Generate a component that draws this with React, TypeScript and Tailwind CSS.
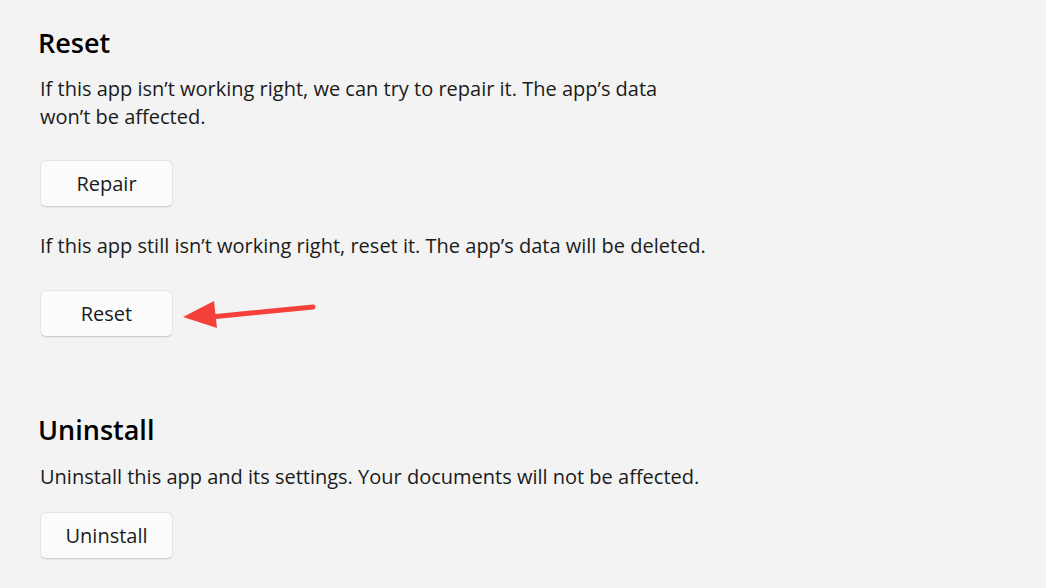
import React from 'react'

function ActionButton({ label }: { label: string }) {
  return (
    <button
      type="button"
      className="h-[47px] w-[133px] rounded-[6px] border border-[#e5e5e5] border-b-[#cfcfcf] bg-[#fbfbfb] text-[20px] text-[#1b1b1b] shadow-[0_1px_0_rgba(0,0,0,0.04)]"
    >
      {label}
    </button>
  )
}

export default function App() {
  return (
    <div
      className="h-[588px] w-[1046px] overflow-hidden bg-[#f3f3f3] pl-[38px] pt-[25px] text-[#1b1b1b]"
      style={{ fontFamily: '"Open Sans", "Noto Sans", Arial, sans-serif' }}
    >
      {/* Reset section */}
      <section>
        <h2 className="text-[27px] font-semibold leading-[36px] text-black">Reset</h2>
        <p className="mt-[14px] w-[657px] pl-[2px] text-[20px] leading-[28px]">
          If this app isn’t working right, we can try to repair it. The app’s data won’t be affected.
        </p>
        <div className="mt-[29px] pl-[2px]">
          <ActionButton label="Repair" />
        </div>
        <p className="mt-[25px] pl-[2px] text-[20px] leading-[28px]">
          If this app still isn’t working right, reset it. The app’s data will be deleted.
        </p>
        <div className="relative mt-[30px] pl-[2px]">
          <ActionButton label="Reset" />
          {/* red annotation arrow */}
          <svg className="absolute left-[143px] top-[10px]" width="140" height="30" viewBox="0 0 140 30">
            <line x1="30" y1="17" x2="132" y2="7" stroke="#f5413a" strokeWidth="5" strokeLinecap="round" />
            <polygon points="2,17 33,1 36,28" fill="#f5413a" />
          </svg>
        </div>
      </section>

      {/* Uninstall section */}
      <section className="mt-[75px]">
        <h2 className="text-[27px] font-semibold leading-[36px] text-black">Uninstall</h2>
        <p className="mt-[15px] pl-[2px] text-[20px] leading-[28px]">
          Uninstall this app and its settings. Your documents will not be affected.
        </p>
        <div className="mt-[21px] pl-[2px]">
          <ActionButton label="Uninstall" />
        </div>
      </section>
    </div>
  )
}
